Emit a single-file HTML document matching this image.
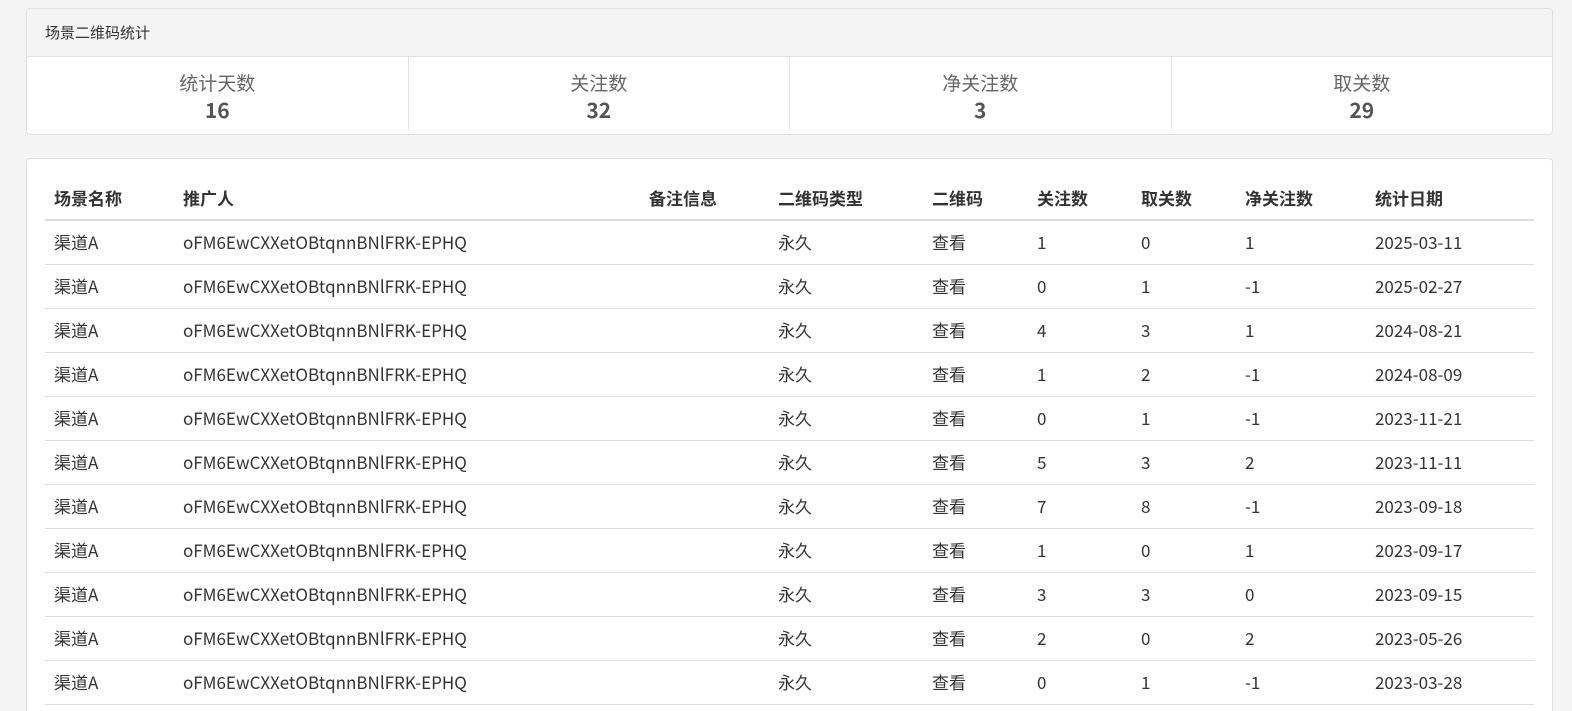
<!DOCTYPE html>
<html><head><meta charset="utf-8"><style>
*{box-sizing:border-box;margin:0;padding:0}
html,body{width:1572px;height:711px;overflow:hidden}
body{background:#f4f4f4;font-family:"Noto Sans CJK SC","Liberation Sans",sans-serif;color:#333;position:relative}
.p1{position:absolute;left:26px;top:8px;width:1527px;height:127px;background:#fff;border:1px solid #e0e0e0;border-radius:4px;overflow:hidden}
.hd{height:48px;background:#f4f4f4;border-bottom:1px solid #e3e3e3;padding-left:18px;line-height:47px;font-size:15px;color:#333}
.st{display:flex;height:77px}
.st div{flex:1;text-align:center;border-right:1px solid #e3e3e3;padding-top:12px;color:#666;font-size:19px;line-height:28px;margin:0 0 4px}
.st div:last-child{border-right:none}
.st b{display:block;font-size:21px;color:#555;line-height:26px}
.p2{position:absolute;left:26px;top:158px;width:1527px;height:553px;background:#fff;border:1px solid #e0e0e0;border-bottom:none;border-radius:4px 4px 0 0}
table{position:absolute;left:18px;top:17px;width:1489px;border-collapse:collapse;font-size:17px;table-layout:fixed}
th{text-align:left;font-weight:bold;height:44px;padding:0 9px;border-bottom:2px solid #ddd;color:#333;line-height:20px;vertical-align:middle}
td{height:44px;padding:0 9px;border-bottom:1px solid #ddd;color:#333;line-height:20px;vertical-align:middle}
</style></head><body>
<div class="p1"><div class="hd">场景二维码统计</div>
<div class="st"><div>统计天数<b>16</b></div><div>关注数<b>32</b></div><div>净关注数<b>3</b></div><div>取关数<b>29</b></div></div></div>
<div class="p2"><table>
<colgroup><col style="width:129px"><col style="width:466px"><col style="width:129px"><col style="width:154px"><col style="width:105px"><col style="width:104px"><col style="width:104px"><col style="width:130px"><col></colgroup>
<tr><th>场景名称</th><th>推广人</th><th>备注信息</th><th>二维码类型</th><th>二维码</th><th>关注数</th><th>取关数</th><th>净关注数</th><th>统计日期</th></tr>
<tr><td>渠道A</td><td>oFM6EwCXXetOBtqnnBNlFRK-EPHQ</td><td></td><td>永久</td><td>查看</td><td>1</td><td>0</td><td>1</td><td>2025-03-11</td></tr>
<tr><td>渠道A</td><td>oFM6EwCXXetOBtqnnBNlFRK-EPHQ</td><td></td><td>永久</td><td>查看</td><td>0</td><td>1</td><td>-1</td><td>2025-02-27</td></tr>
<tr><td>渠道A</td><td>oFM6EwCXXetOBtqnnBNlFRK-EPHQ</td><td></td><td>永久</td><td>查看</td><td>4</td><td>3</td><td>1</td><td>2024-08-21</td></tr>
<tr><td>渠道A</td><td>oFM6EwCXXetOBtqnnBNlFRK-EPHQ</td><td></td><td>永久</td><td>查看</td><td>1</td><td>2</td><td>-1</td><td>2024-08-09</td></tr>
<tr><td>渠道A</td><td>oFM6EwCXXetOBtqnnBNlFRK-EPHQ</td><td></td><td>永久</td><td>查看</td><td>0</td><td>1</td><td>-1</td><td>2023-11-21</td></tr>
<tr><td>渠道A</td><td>oFM6EwCXXetOBtqnnBNlFRK-EPHQ</td><td></td><td>永久</td><td>查看</td><td>5</td><td>3</td><td>2</td><td>2023-11-11</td></tr>
<tr><td>渠道A</td><td>oFM6EwCXXetOBtqnnBNlFRK-EPHQ</td><td></td><td>永久</td><td>查看</td><td>7</td><td>8</td><td>-1</td><td>2023-09-18</td></tr>
<tr><td>渠道A</td><td>oFM6EwCXXetOBtqnnBNlFRK-EPHQ</td><td></td><td>永久</td><td>查看</td><td>1</td><td>0</td><td>1</td><td>2023-09-17</td></tr>
<tr><td>渠道A</td><td>oFM6EwCXXetOBtqnnBNlFRK-EPHQ</td><td></td><td>永久</td><td>查看</td><td>3</td><td>3</td><td>0</td><td>2023-09-15</td></tr>
<tr><td>渠道A</td><td>oFM6EwCXXetOBtqnnBNlFRK-EPHQ</td><td></td><td>永久</td><td>查看</td><td>2</td><td>0</td><td>2</td><td>2023-05-26</td></tr>
<tr><td>渠道A</td><td>oFM6EwCXXetOBtqnnBNlFRK-EPHQ</td><td></td><td>永久</td><td>查看</td><td>0</td><td>1</td><td>-1</td><td>2023-03-28</td></tr>
</table></div>
</body></html>
